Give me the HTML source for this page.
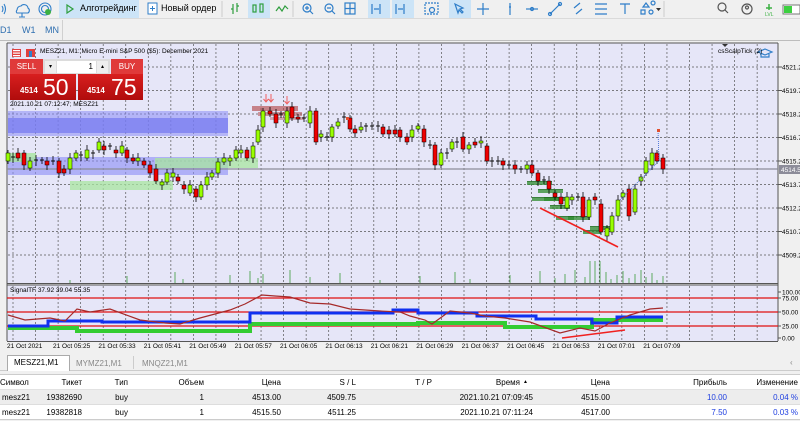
<!DOCTYPE html>
<html><head><meta charset="utf-8">
<style>
*{margin:0;padding:0;box-sizing:border-box}
body{width:800px;height:421px;overflow:hidden;background:#f0f0f0;font-family:"Liberation Sans",sans-serif;position:relative;font-size:8px;color:#000}
.a{position:absolute;white-space:nowrap}
.hd,.rw{position:absolute;left:0;width:800px;height:15px;font-size:8px;line-height:15px}
.c{position:absolute;text-align:right}
</style></head><body>
<div class="a" style="left:0;top:0;width:800px;height:19px;background:#f0f0f0;border-bottom:1px solid #dadada"></div>
<svg class="a" style="left:0;top:0" width="800" height="19">
<g fill="none" stroke="#2f7ec9" stroke-width="1.1">
<path d="M2 6q2 3 0 6M4 4q3 5 0 10"/>
<path d="M17 10a4 4 0 0 1 4-4a4 4 0 0 1 7 2a3 3 0 0 1 0 5h-11a2 2 0 0 1 0-3zM22 13v4M19 17h6"/>
<circle cx="45" cy="9" r="6"/><circle cx="45" cy="9" r="3.5"/>
</g>
<circle cx="48" cy="12" r="3" fill="#3cb043"/>
<rect x="59" y="0" width="80" height="18" fill="#cce4f7"/>
<path d="M67 5l6 4-6 4z" fill="none" stroke="#2e9e3e" stroke-width="1.2"/>
<rect x="148" y="3" width="9" height="11" fill="#fff" stroke="#2f7ec9"/>
<path d="M152.5 6v5M150 8.5h5" stroke="#2f7ec9"/>
<line x1="222" y1="1" x2="222" y2="17" stroke="#ccc"/>
<g stroke="#2e9e3e" fill="none" stroke-width="1.2">
<path d="M233 4v10M231 9h2M237 3v9M237 6h2"/>
<rect x="248" y="0" width="22" height="18" fill="#cce4f7" stroke="none"/>
<rect x="253" y="5" width="3" height="7"/><rect x="260" y="4" width="3" height="8"/>
<path d="M276 11l3-4 3 4 3-5 3 3"/>
</g>
<line x1="293" y1="1" x2="293" y2="17" stroke="#ccc"/>
<g stroke="#2f7ec9" fill="none" stroke-width="1.2">
<circle cx="307" cy="8" r="4"/><path d="M310 11l3 3M305 8h4M307 6v4"/>
<circle cx="329" cy="8" r="4"/><path d="M332 11l3 3M327 8h4"/>
<rect x="345" y="3" width="10" height="11"/><path d="M350 3v11M345 8.5h10"/>
<rect x="368" y="0" width="22" height="18" fill="#cce4f7" stroke="none"/>
<path d="M372 4v10M380 4v10M374 9h5"/>
<rect x="392" y="0" width="22" height="18" fill="#cce4f7" stroke="none"/>
<path d="M396 4v10M404 4v10M398 9h5"/>
<rect x="425" y="3" width="13" height="11" stroke-dasharray="2 1"/><circle cx="432" cy="10" r="2.5"/>
<rect x="449" y="0" width="22" height="18" fill="#cce4f7" stroke="none"/>
<path d="M455 4l8 4-3 1 3 3-1 1-3-3-1 3z"/>
<path d="M483 3v12M477 9h12"/>
<path d="M510 3v12M509 7h2"/>
<path d="M526 9h12"/><circle cx="532" cy="9" r="1.5"/>
<path d="M550 14l10-10"/><circle cx="550" cy="14" r="1.5"/><circle cx="560" cy="4" r="1.5"/>
<path d="M574 8l6-5M576 14l6-5"/>
<path d="M595 4h12M595 9h12M595 14h12"/>
<path d="M620 4h10M625 4v10"/>
<path d="M643 7l3-4 3 4zM653 5a2 2 0 1 1 0.1 0M641 10h4v4h-4zM649 12a2 2 0 1 0 4 0a2 2 0 1 0-4 0"/>
</g>
<path d="M656 8h5l-2.5 3z" fill="#333"/>
<line x1="664" y1="1" x2="664" y2="17" stroke="#ccc"/>
<g stroke="#555" fill="none" stroke-width="1.2"><circle cx="722" cy="7" r="4"/><path d="M725 10l3 3"/><circle cx="747" cy="9" r="5"/><circle cx="747" cy="7.5" r="1.5"/></g>
<path d="M769 4v6M766 8h6" stroke="#3cb043" stroke-width="1.5"/><text x="765" y="16" font-size="5" fill="#3cb043">LVL</text>
<rect x="783" y="5" width="17" height="9" fill="#fff" stroke="#777"/><rect x="784" y="6" width="8" height="7" fill="#3cd040"/>
</svg>
<div class="a" style="left:80px;top:3px;font-size:9px">Алготрейдинг</div>
<div class="a" style="left:161px;top:3px;font-size:9px">Новый ордер</div>
<div class="a" style="left:0;top:20px;width:800px;height:21px;background:#f0f0f0;border-bottom:1px solid #bdbdbd"></div>
<div class="a" style="left:0;top:25px;font-size:9px;color:#2f6fb0">D1</div>
<div class="a" style="left:22px;top:25px;font-size:9px;color:#2f6fb0">W1</div>
<div class="a" style="left:45px;top:25px;font-size:9px;color:#2f6fb0">MN</div>
<div class="a" style="left:62px;top:20px;width:1px;height:20px;background:#d0d0d0"></div>
<svg class="a" id="ch" style="left:0;top:41px" width="800" height="310" viewBox="0 41 800 310"></svg>
<div class="a" style="left:10px;top:59px;width:33px;height:15px;background:#e03a3a;color:#fff;font-size:8px;line-height:15px;text-align:center">SELL</div>
<div class="a" style="left:43px;top:59px;width:67px;height:16px;background:#dcdcdc"></div>
<div class="a" style="left:45px;top:61px;width:11px;height:12px;background:#eee;font-size:6px;text-align:center;line-height:12px">▾</div>
<div class="a" style="left:57px;top:61px;width:39px;height:12px;background:#fff;font-size:8px;text-align:right;padding-right:3px;line-height:12px">1</div>
<div class="a" style="left:97px;top:61px;width:11px;height:12px;background:#eee;font-size:6px;text-align:center;line-height:12px">▴</div>
<div class="a" style="left:111px;top:59px;width:32px;height:15px;background:#e03a3a;color:#fff;font-size:8px;line-height:15px;text-align:center">BUY</div>
<div class="a" style="left:10px;top:74px;width:66px;height:26px;background:linear-gradient(#d81f1f,#b00c0c);color:#fff"><span class="a" style="left:10px;top:12px;font-size:8px;font-weight:bold">4514</span><span class="a" style="left:33px;top:0px;font-size:23px">50</span></div>
<div class="a" style="left:78px;top:74px;width:65px;height:26px;background:linear-gradient(#d81f1f,#b00c0c);color:#fff"><span class="a" style="left:9px;top:12px;font-size:8px;font-weight:bold">4514</span><span class="a" style="left:33px;top:0px;font-size:23px">75</span></div>
<div class="a" style="left:10px;top:101px;font-size:6.5px">2021.10.21 07:12:47; MESZ21</div>
<div class="a" style="left:40px;top:48px;font-size:6.5px">MESZ21, M1:  Micro E-mini S&amp;P 500 ($5): December 2021</div>
<div class="a" style="left:718px;top:48px;font-size:6.5px">csScalpTick (2)</div>
<div class="a" style="left:10px;top:287px;font-size:6.5px">SignalTF 37.92 39.04 55.35</div>
<div class="a" style="left:0;top:351px;width:800px;height:20px;background:#f0f0f0;border-bottom:1px solid #ccc"></div>
<div class="a" style="left:7px;top:355px;width:63px;height:16px;background:#fff;border:1px solid #aaa;border-bottom:none;font-size:8px;line-height:14px;padding-left:6px">MESZ21,M1</div>
<div class="a" style="left:76px;top:359px;font-size:8px;color:#888">MYMZ21,M1</div>
<div class="a" style="left:133px;top:356px;width:1px;height:13px;background:#ccc"></div>
<div class="a" style="left:142px;top:359px;font-size:8px;color:#888">MNQZ21,M1</div>
<div class="a" style="left:790px;top:358px;font-size:8px;color:#888">‹</div>
<div class="hd" style="top:374px;height:16px;background:#fff;border-top:1px solid #ccc;border-bottom:1px solid #e2e2e2">
<span class="c" style="left:0">Символ</span><span class="c" style="right:718px">Тикет</span><span class="c" style="right:672px">Тип</span><span class="c" style="right:596px">Объем</span><span class="c" style="right:519px">Цена</span><span class="c" style="right:444px">S / L</span><span class="c" style="right:368px">T / P</span><span class="c" style="right:280px">Время</span><span class="c" style="left:523px;font-size:5px">▲</span><span class="c" style="right:190px">Цена</span><span class="c" style="right:73px">Прибыль</span><span class="c" style="right:2px">Изменение</span></div>
<div class="rw" style="top:390px;background:#ededed;border-bottom:1px solid #ddd">
<span class="c" style="left:2px">mesz21</span><span class="c" style="right:718px">19382690</span><span class="c" style="right:672px">buy</span><span class="c" style="right:596px">1</span><span class="c" style="right:519px">4513.00</span><span class="c" style="right:444px">4509.75</span><span class="c" style="right:267px">2021.10.21 07:09:45</span><span class="c" style="right:190px">4515.00</span><span class="c" style="right:73px;color:#1f3fe0">10.00</span><span class="c" style="right:2px;color:#1f3fe0">0.04 %</span></div>
<div class="rw" style="top:405px;background:#fff;border-bottom:1px solid #ccc">
<span class="c" style="left:2px">mesz21</span><span class="c" style="right:718px">19382818</span><span class="c" style="right:672px">buy</span><span class="c" style="right:596px">1</span><span class="c" style="right:519px">4515.50</span><span class="c" style="right:444px">4511.25</span><span class="c" style="right:267px">2021.10.21 07:11:24</span><span class="c" style="right:190px">4517.00</span><span class="c" style="right:73px;color:#1f3fe0">7.50</span><span class="c" style="right:2px;color:#1f3fe0">0.03 %</span></div>
<script>
var s='';
function R(x,y,w,h,f,o){s+='<rect x="'+x+'" y="'+y+'" width="'+w+'" height="'+h+'" fill="'+f+'"'+(o?' opacity="'+o+'"':'')+'/>';}
function L(x1,y1,x2,y2,c,w,d){s+='<line x1="'+x1+'" y1="'+y1+'" x2="'+x2+'" y2="'+y2+'" stroke="'+c+'" stroke-width="'+(w||1)+'"'+(d?' stroke-dasharray="'+d+'"':'')+'/>';}
function T(x,y,t,sz,c){s+='<text x="'+x+'" y="'+y+'" font-size="'+(sz||6.5)+'" fill="'+(c||'#000')+'" font-family="Liberation Sans">'+t+'</text>';}
R(0,41,800,310,'#f0f0f0');
R(7,43,771,240,'#e6e6f8');R(7,285,771,56,'#e6e6f8');
L(7,43,7,341,'#555');L(778,43,778,341,'#555');L(7,43,778,43,'#555');
L(7,283.5,778,283.5,'#555');L(7,285,778,285,'#555');L(7,341.5,778,341.5,'#555');
for(var gx=13;gx<778;gx+=22.55){L(gx,44,gx,283,'#555',0.7,'2 2');L(gx,286,gx,341,'#555',0.7,'2 2');}
var py=[67,90.5,114,137.5,161,184.5,208,231.5,255],pl=['4521.2','4519.7','4518.2','4516.7','4515.2','4513.7','4512.2','4510.7','4509.2'];
for(var i=0;i<py.length;i++){L(8,py[i],778,py[i],'#555',0.7,'2 2');L(778,py[i],782,py[i],'#555');T(782,py[i]+2.5,pl[i],6.5);}
R(8,111,220,25,'#8a8cf6',0.55);R(8,118,220,15,'#7477f0',0.7);
R(8,157,220,18,'#8a8cf6',0.6);
R(8,153,28,9,'#a8e6a0',0.8);R(155,158,103,10,'#a8e6a0',0.75);R(70,181,103,9,'#a8e6a0',0.75);
L(7,169,778,169,'#8c8c99',1.2);
R(779,165,21,9,'#8c8c99');T(781,172,'4514.5',6.5,'#fff');
R(252,106,46,5,'#b04040',0.6);R(258,112,44,4,'#b04040',0.5);R(270,117,34,3,'#b04040',0.4);
s+='<path d="M266 94v8M263.5 99l2.5 3 2.5-3M271 94v8M268.5 99l2.5 3 2.5-3M287 96v8M284.5 101l2.5 3 2.5-3" stroke="#f06060" fill="none" stroke-width="1"/>';
var vx=[70,127,175,183,230,250,258,263,290,310,340,380,420,455,470,510,540,555,565,575,585,590,595,600,606,611,617,623,629,635,641,646,652,657,663];
for(i=0;i<vx.length;i++){var vh=3+((i*37)%11);if(vx[i]>=590&&vx[i]<=600)vh=22;L(vx[i],283,vx[i],283-vh,'#3a9a3a',0.8);}
var C=[[8,153,161,'g'],[13,157,158,'d'],[18,153,158,'r'],[24,153,165,'r'],[30,161,168,'g'],[36,160,161,'d'],[42,160,161,'d'],[47,161,165,'r'],[53,161,162,'d'],[59,161,173,'r'],[64,169,173,'r'],[70,158,169,'g'],[76,153,158,'g'],[81,155,156,'d'],[87,150,158,'g'],[93,153,154,'d'],[99,142,150,'g'],[104,146,150,'r'],[110,146,147,'d'],[116,150,153,'r'],[122,146,153,'g'],[127,150,158,'r'],[133,158,161,'r'],[138,158,161,'g'],[144,161,165,'r'],[150,165,173,'r'],[156,169,181,'r'],[162,182,185,'g'],[167,173,182,'g'],[173,173,177,'g'],[178,177,181,'r'],[184,185,189,'r'],[190,185,193,'g'],[196,189,197,'r'],[201,185,197,'g'],[207,177,185,'g'],[212,173,177,'g'],[218,162,173,'g'],[224,158,162,'g'],[230,158,161,'g'],[236,150,158,'g'],[241,150,153,'g'],[247,150,158,'r'],[253,146,158,'g'],[258,130,142,'g'],[263,111,127,'g'],[270,111,114,'r'],[276,114,123,'r'],[281,114,115,'d'],[287,111,123,'g'],[292,107,118,'r'],[298,117,118,'r'],[304,118,119,'d'],[310,111,123,'g'],[316,111,142,'r'],[321,134,137,'g'],[327,137,138,'d'],[332,127,137,'g'],[338,122,126,'g'],[344,117,118,'d'],[350,118,129,'r'],[355,129,133,'r'],[361,127,130,'g'],[366,126,127,'d'],[372,126,127,'d'],[378,126,127,'d'],[383,127,134,'r'],[389,130,134,'r'],[395,130,134,'r'],[400,130,137,'r'],[407,137,142,'r'],[412,130,137,'g'],[418,126,129,'g'],[424,129,142,'r'],[430,145,146,'d'],[435,145,165,'r'],[441,153,165,'g'],[447,153,154,'d'],[452,142,149,'g'],[457,142,143,'d'],[463,137,149,'r'],[469,145,149,'g'],[475,142,145,'r'],[481,141,143,'g'],[487,146,161,'r'],[492,161,162,'d'],[498,161,162,'d'],[503,161,165,'r'],[509,165,166,'d'],[515,165,169,'r'],[521,169,170,'d'],[527,165,169,'g'],[532,165,173,'r'],[538,173,181,'r'],[544,180,181,'d'],[549,181,189,'r'],[555,193,197,'r'],[561,197,204,'r'],[567,197,208,'g'],[572,197,200,'g'],[578,197,198,'d'],[583,197,217,'r'],[589,200,217,'g'],[595,197,200,'r'],[601,204,232,'r'],[607,228,236,'g'],[612,216,232,'g'],[618,200,216,'g'],[623,193,197,'g'],[629,189,216,'r'],[635,189,212,'g'],[641,177,181,'g'],[646,161,173,'g'],[652,153,165,'g'],[657,153,161,'r'],[663,158,169,'r']];
var G=[[527,181,25],[538,189,25],[544,197,22],[550,205,20],[556,216,18],[568,216,22],[583,230,18],[590,226,22],[532,197,30]];
for(i=0;i<G.length;i++){R(G[i][0],G[i][1],G[i][2],4,'#2e8b2e',0.75);L(G[i][0],G[i][1]+0.5,G[i][0]+G[i][2],G[i][1]+0.5,'#1b5e1b',0.6);}
for(i=0;i<C.length;i++){var c=C[i],x=c[0],col=c[3]=='r'?'#e00':(c[3]=='g'?'#9f0':'#000');
L(x,c[1]-3-(i%3),x,c[2]+3+(i%2)*2,'#000',0.8);
if(c[3]=='d'){L(x-2,c[1],x+2,c[1],'#000',0.9);}else{s+='<rect x="'+(x-2)+'" y="'+c[1]+'" width="4" height="'+Math.max(2,c[2]-c[1])+'" fill="'+col+'" stroke="#000" stroke-width="0.5"/>';}}
L(540,208,618,247,'#f02020',1.6);
L(620,200,660,160,'#3060d0',0.8,'1 1');L(659,160,658,131,'#3060d0',0.8,'1 1');
R(657,129,3,3,'#e05030');R(346,117,3,3,'#e05030');
L(7,298,778,298,'#e01010',1.2);L(7,312,778,312,'#e01010',1.2);L(7,326,778,326,'#e01010',1.2);
var ry=[[100,292,'100.00'],[75,298,'75.00'],[50,312,'50.00'],[25,326,'25.00'],[0,338,'0.00']];
for(i=0;i<ry.length;i++){L(778,ry[i][1],781,ry[i][1],'#555');T(782,ry[i][1]+2.5,ry[i][2],6.5);}
function P(pts,c,w){s+='<polyline points="'+pts+'" fill="none" stroke="'+c+'" stroke-width="'+w+'"/>';}
P('8,328 77,328 77,331 250,331 250,324 418,324 418,323 505,323 505,327 592,327 592,320 663,320','#33cc33',4);
P('8,326 48,326 48,321 102,321 102,322 250,322 250,313 393,313 393,310 418,310 418,313 477,313 477,316 536,316 536,319 592,319 592,323 617,323 617,317 663,317','#1030f0',3);
P('8,315 25,320 50,318 65,321 77,309 90,312 110,309 140,320 165,323 180,324 200,318 230,310 245,304 262,295 275,296 290,297 310,303 330,304 350,309 380,311 400,312 410,316 425,320 432,324 450,311 470,313 485,316 505,318 530,322 560,333 580,328 595,331 610,323 630,315 650,309 663,308','#a52a2a',1.2);
L(562,338,625,330,'#f02020',1.6);
T(7,348,'21 Oct 2021',6.5);
var tl=['05:25','05:33','05:41','05:49','05:57','06:05','06:13','06:21','06:29','06:37','06:45','06:53','07:01','07:09'];
for(i=0;i<tl.length;i++){T(53+45.4*i,348,'21 Oct '+tl[i],6.5);}
R(12,49,9,8,'#e04040');R(13,50,7,1.2,'#fff');R(13,52.5,7,1.2,'#fff');R(13,55,7,1.2,'#fff');
R(26,49,9,8,'#e04040');R(29,51,3,6,'#2f7ec9');
s+='<path d="M758 52l7-3 7 3-7 3z M761 54v3h8v-3" fill="none" stroke="#2f7ec9" stroke-width="1.2"/>';
s+='<path d="M722 44h6l-3 3z" fill="#333"/>';
document.getElementById('ch').innerHTML=s;
</script>
</body></html>
